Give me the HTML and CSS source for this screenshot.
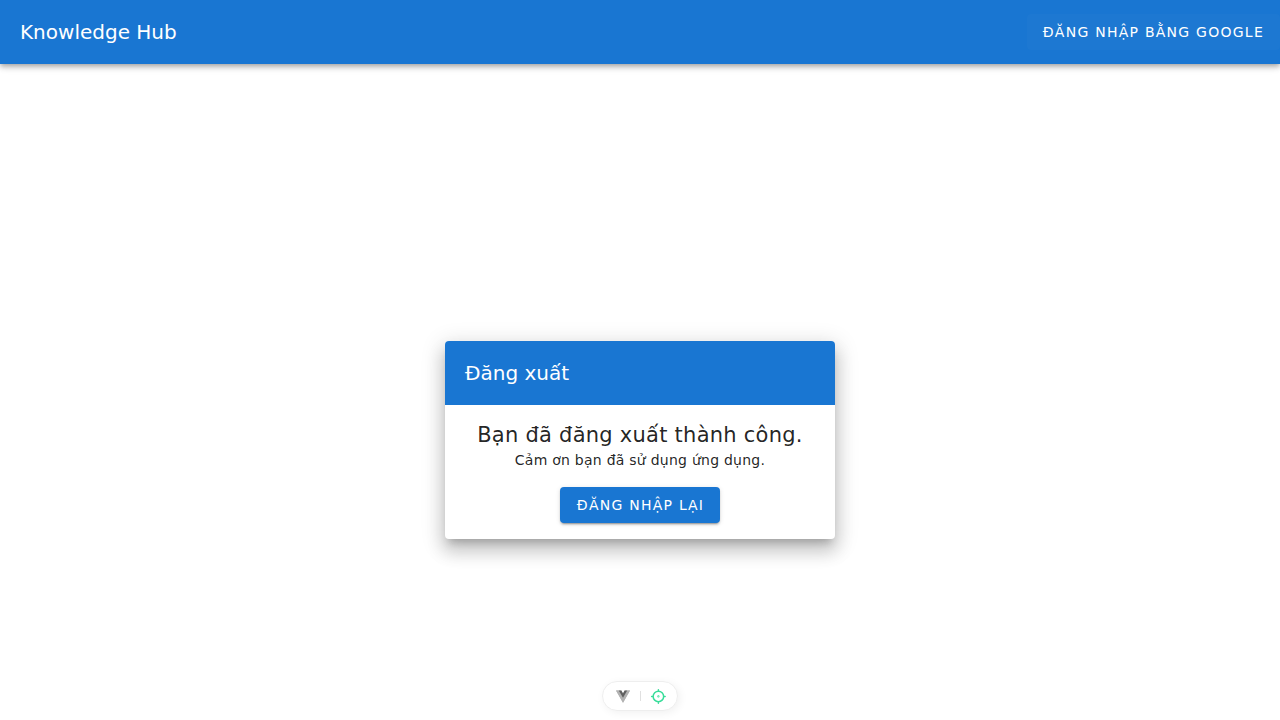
FILE: index.html
```html
<!DOCTYPE html>
<html lang="vi">
<head>
<meta charset="utf-8">
<title>Knowledge Hub</title>
<link rel="stylesheet" href="styles.css">
</head>
<body>
<header class="app-bar">
  <div class="toolbar-title">Knowledge Hub</div>
  <button class="btn btn-tonal">Đăng nhập bằng Google</button>
</header>
<main class="main">
  <section class="card">
    <div class="card-bar">Đăng xuất</div>
    <div class="card-text">
      <h1 class="heading">Bạn đã đăng xuất thành công.</h1>
      <p class="message">Cảm ơn bạn đã sử dụng ứng dụng.</p>
      <button class="btn btn-primary">Đăng nhập lại</button>
    </div>
  </section>
</main>
<div class="devtools">
  <svg class="vue-icon" viewBox="0 0 256 198">
    <path fill="#b2b2b2" d="M204.8 0H256L128 220.8L0 0h97.92L128 51.2L157.44 0z"/>
    <path fill="#b2b2b2" d="m0 0l128 220.8L256 0h-51.2L128 132.48L50.56 0z"/>
    <path fill="#606060" d="M50.56 0L128 133.12L204.8 0h-47.36L128 51.2L97.92 0z"/>
  </svg>
  <span class="divider"></span>
  <svg class="inspect-icon" viewBox="0 0 18 18" fill="none" stroke="currentColor" stroke-width="1.5" stroke-linecap="round">
    <circle cx="9.4" cy="9.4" r=".375"/>
    <path d="M4.15 9.4a5.25 5.25 0 1 0 10.5 0a5.25 5.25 0 1 0-10.5 0m5.25-6.75v1.5m-6.75 5.25h1.5m5.25 5.25v1.5m5.25-6.75h1.5"/>
  </svg>
</div>
</body>
</html>
```
FILE: styles.css
```css
* { box-sizing: border-box; margin: 0; padding: 0; }
body {
  height: 720px;
  overflow: hidden;
  display: flex;
  flex-direction: column;
  font-family: "DejaVu Sans", sans-serif;
  font-size: 16px;
  line-height: 1.5;
  color: rgba(0, 0, 0, .87);
  background: #fff;
}
.app-bar {
  height: 64px;
  flex: none;
  display: flex;
  align-items: center;
  justify-content: space-between;
  padding-left: 20px;
  color: #fff;
  background: #1976d2;
  box-shadow: 0 2px 4px -1px rgba(0, 0, 0, .2), 0 4px 5px 0 rgba(0, 0, 0, .14), 0 1px 10px 0 rgba(0, 0, 0, .12);
}
.toolbar-title { font-size: 20px; }
.btn {
  display: inline-flex;
  align-items: center;
  justify-content: center;
  height: 36px;
  padding: 0 16px;
  border: 0;
  border-radius: 4px;
  font-family: inherit;
  font-size: 14px;
  font-weight: 500;
  letter-spacing: .0892857143em;
  line-height: normal;
  text-transform: uppercase;
  white-space: nowrap;
  color: #fff;
}
.btn-tonal { background: rgba(255, 255, 255, .02); }
.btn-primary {
  width: 160px;
  padding: 0 15.5px 0 16.5px;
  margin-top: 16px;
  background: #1976d2;
  box-shadow: 0 3px 1px -2px rgba(0, 0, 0, .2), 0 2px 2px 0 rgba(0, 0, 0, .14), 0 1px 5px 0 rgba(0, 0, 0, .12);
}
.main {
  flex: 1;
  display: flex;
  justify-content: center;
  align-items: flex-start;
  padding-top: 277px;
}
.card {
  width: 390px;
  height: 198px;
  overflow: hidden;
  border-radius: 4px;
  background: #fff;
  box-shadow: 0 7px 8px -4px rgba(0, 0, 0, .2), 0 12px 17px 2px rgba(0, 0, 0, .14), 0 5px 22px 4px rgba(0, 0, 0, .12);
}
.card-bar {
  display: flex;
  align-items: center;
  height: 64px;
  padding: 0 20px;
  font-size: 20px;
  color: #fff;
  background: #1976d2;
}
.card-text {
  display: flex;
  flex-direction: column;
  align-items: center;
  padding: 16px;
  font-size: 14px;
  line-height: 1.425;
  letter-spacing: .0178571429em;
}
.heading { font-size: 21px; font-weight: 400; letter-spacing: .25px; }
.message { font-size: 14px; }
.devtools {
  position: fixed;
  left: 602px;
  top: 681px;
  display: flex;
  align-items: center;
  width: 76px;
  height: 30px;
  padding-left: 13px;
  border: 1px solid #eee;
  border-radius: 15px;
  background: #fff;
  box-shadow: 2px 2px 8px rgba(0, 0, 0, .06);
}
.vue-icon { width: 14px; height: 14px; overflow: visible; }
.divider { width: 1px; height: 10px; margin: 0 8px 0 10px; background: #e0e0e0; }
.inspect-icon { width: 18px; height: 18px; color: #38dd9a; }
```
